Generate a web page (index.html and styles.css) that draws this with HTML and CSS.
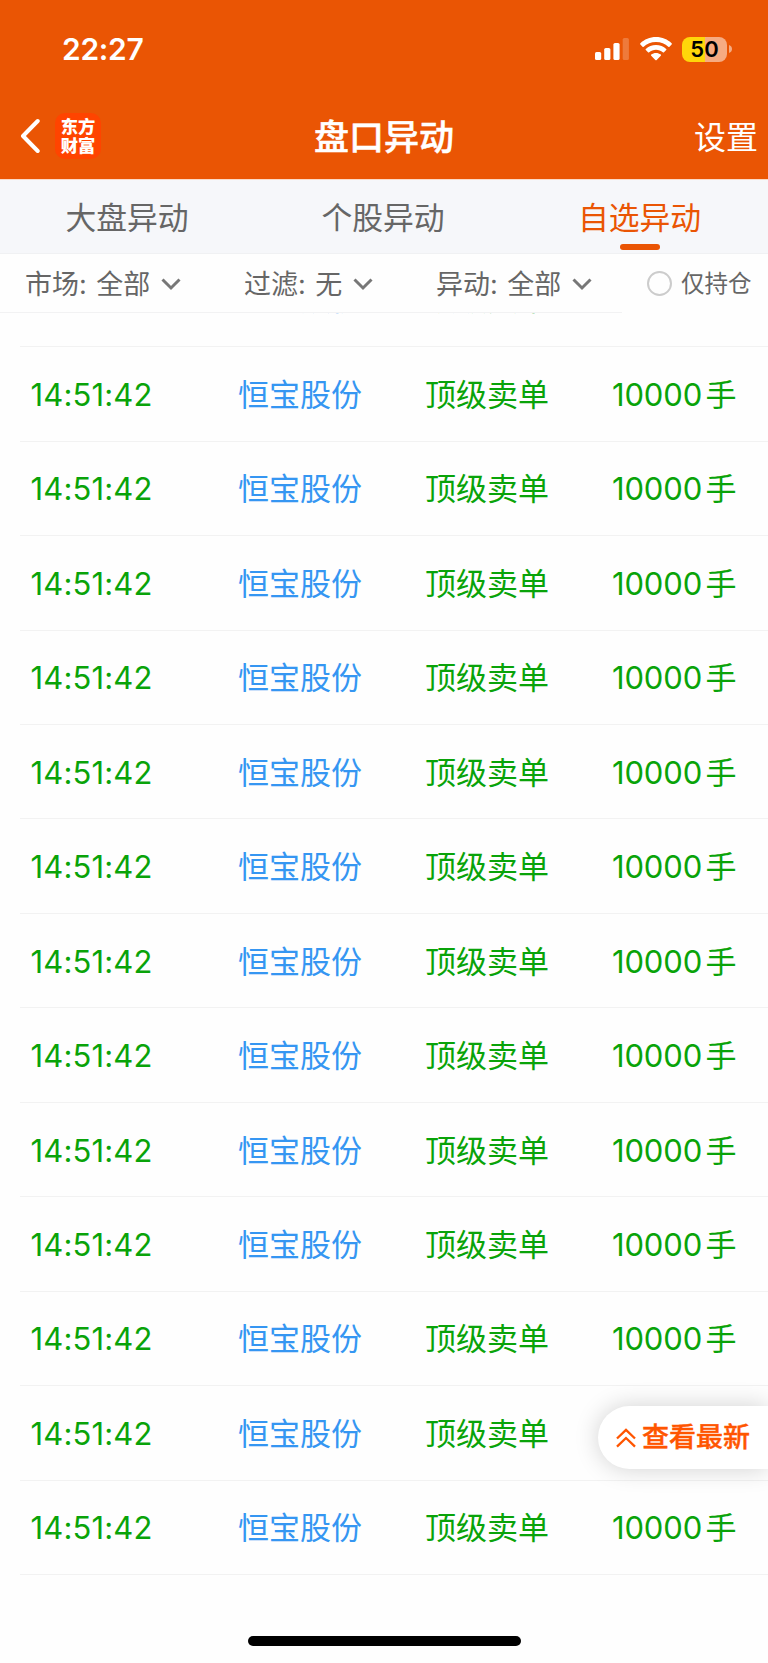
FILE: index.html
```html
<!DOCTYPE html>
<html lang="zh-CN">
<head>
<meta charset="utf-8">
<title>盘口异动</title>
<link rel="stylesheet" href="styles.css">
</head>
<body>
<div class="app">
  <header class="header">
    <div class="status">
      <span class="clock">22:27</span>
      <div class="status-icons">
        <svg class="signal" width="34" height="24" viewBox="0 0 34 24" fill="#fff">
          <rect x="0" y="15" width="6.2" height="8" rx="1.6"/>
          <rect x="9.2" y="11" width="6.2" height="12" rx="1.6"/>
          <rect x="18.4" y="6" width="6.2" height="17" rx="1.6"/>
          <rect x="27.7" y="1" width="6.2" height="22" rx="1.6" opacity=".22"/>
        </svg>
        <svg class="wifi" width="32" height="24" viewBox="0 0 32 24" fill="#fff">
          <path d="M16 0C22.200 0 27.700 2.400 31.600 6.200Q32.200 6.900 31.600 7.500L29.500 9.700Q28.900 10.200 28.300 9.700C25.200 6.800 20.900 5 16 5S6.800 6.800 3.700 9.700Q3.100 10.200 2.500 9.700L.4 7.500Q-.2 6.900 .4 6.200C4.300 2.400 9.800 0 16 0Z"/>
          <path d="M16 8C20 8 23.600 9.500 26.200 11.900Q26.800 12.500 26.200 13.100L24 15.200Q23.400 15.800 22.800 15.200C21 13.700 18.600 12.800 16 12.800S11 13.700 9.200 15.200Q8.600 15.800 8 15.200L5.800 13.100Q5.200 12.500 5.800 11.900C8.400 9.500 12 8 16 8Z"/>
          <path d="M16 16C17.800 16 19.500 16.600 20.800 17.600Q21.400 18.200 20.800 18.800L16.700 22.900Q16 23.600 15.300 22.900L11.200 18.800Q10.600 18.200 11.200 17.600C12.500 16.600 14.200 16 16 16Z"/>
        </svg>
        <div class="battery">50</div>
        <svg class="battery-tip" width="3" height="8" viewBox="0 0 3 8"><path d="M0 0Q3 1.200 3 4T0 8Z" fill="#f6ab82"/></svg>
      </div>
    </div>
    <div class="navbar">
      <div class="nav-left">
        <svg class="back" width="20" height="36" viewBox="0 0 20 36" fill="none" stroke="#fff" stroke-width="4" stroke-linecap="round" stroke-linejoin="round"><path d="M17.700 3L3 18L17.700 33"/></svg>
        <div class="logo"><span>东方</span><span>财富</span></div>
      </div>
      <h1 class="title">盘口异动</h1>
      <span class="settings">设置</span>
    </div>
  </header>
  <nav class="tabs">
    <span class="tab">大盘异动</span>
    <span class="tab">个股异动</span>
    <span class="tab active">自选异动</span>
  </nav>
  <div class="filters">
    <div class="filter market"><span>市场:</span><span>全部</span><svg class="chev" width="20" height="13" viewBox="0 0 20 13"><path d="M1.500 1.500L10 10L18.500 1.500"/></svg></div>
    <div class="filter screen"><span>过滤:</span><span>无</span><svg class="chev" width="20" height="13" viewBox="0 0 20 13"><path d="M1.500 1.500L10 10L18.500 1.500"/></svg></div>
    <div class="filter change"><span>异动:</span><span>全部</span><svg class="chev" width="20" height="13" viewBox="0 0 20 13"><path d="M1.500 1.500L10 10L18.500 1.500"/></svg></div>
    <div class="holding"><span class="radio"></span><span>仅持仓</span></div>
  </div>
  <main class="list" id="list"></main>
  <div class="latest">
    <svg width="20" height="20" viewBox="0 0 20 20" fill="none" stroke="#ff5500" stroke-width="2.300"><path d="M1 10.500L10 1.800L19 10.500M1 18.700L10 10L19 18.700"/></svg>
    <span>查看最新</span>
  </div>
  <div class="home"></div>
</div>
<script src="list.js"></script>
</body>
</html>
```
FILE: styles.css
```css
* { box-sizing: border-box; }
body { margin: 0; font-family: Inter, "Noto Sans CJK SC", sans-serif; }
.app { position: relative; width: 768px; height: 1663px; overflow: hidden; background: #fefefe; display: flex; flex-direction: column; }
.header { flex: none; height: 179px; background: #ea5504; color: #fff; }
.status { height: 98px; padding: 0 36px 0 62px; display: flex; align-items: center; justify-content: space-between; }
.clock { font-size: 30px; font-weight: 600; letter-spacing: -.3px; }
.status-icons { display: flex; align-items: center; }
.wifi { margin-left: 11px; }
.battery { margin-left: 10px; width: 45px; height: 25px; border-radius: 8px; background: linear-gradient(90deg, #ffd60a 51%, #f6ab82 51%); color: #000; font-size: 22px; font-weight: 600; line-height: 25px; text-align: center; }
.battery-tip { margin-left: 2px; }
.navbar { height: 76px; display: grid; grid-template-columns: 1fr auto 1fr; align-items: center; padding: 0 10px 0 20px; }
.nav-left { display: flex; align-items: center; gap: 15px; }
.logo { width: 46px; height: 46px; border-radius: 10px; background: #ff4400; display: flex; flex-direction: column; align-items: center; justify-content: center; font-family: "Noto Sans CJK SC", sans-serif; font-size: 17.300px; font-weight: 900; line-height: 19.500px; padding-bottom: 2px; }
.title { margin: 2px 5px 0 -5px; font-size: 35px; font-weight: 500; -webkit-text-stroke: .5px #fff; line-height: 50px; }
.settings { justify-self: end; margin-top: 3px; font-size: 32px; line-height: 50px; }
.tabs { flex: none; height: 75px; display: grid; grid-template-columns: repeat(3, 1fr); background: #f6f7fa; border-top: 1px solid #fbd9c6; border-bottom: 1px solid #f0f1f3; color: #666; font-size: 30.800px; line-height: 76px; text-align: center; }
.tab { height: 73px; padding-right: 2px; }
.tab.active { position: relative; color: #ea5504; padding-right: 1px; }
.tab.active::after { content: ""; position: absolute; left: 108px; top: 64px; width: 40px; height: 6px; border-radius: 3px; background: #ea5504; }
.filters { flex: none; height: 59px; display: flex; align-items: center; padding-left: 25px; color: #666; font-size: 27px; background: linear-gradient(#f2f2f3, #f2f2f3) 0 100% / 622px 1px no-repeat; line-height: 34px; }
.filter { display: flex; align-items: center; }
.filter span { margin-top: 2px; }
.filter span + span { margin-left: 9.500px; }
.market { width: 219px; }
.screen { width: 192px; }
.change { width: 211px; }
.chev { margin-left: 11px; margin-top: 1px; fill: none; stroke: #777; stroke-width: 3; }
.holding { display: flex; align-items: center; font-size: 23.500px; gap: 9px; }
.radio { width: 25px; height: 25px; border: 2px solid #ccc; border-radius: 50%; }
.list { flex: none; height: 1270px; overflow: hidden; display: flex; flex-direction: column; }
.row { flex: none; height: 94.460px; margin-left: 20px; padding: 2px 0 0 10.500px; border-bottom: 1px solid #f2f2f2; display: grid; grid-template-columns: 207.500px 187px 187px 1fr; align-items: center; font-size: 31px; line-height: 40px; color: #09a309; }
.row:first-child { margin-top: -60.300px; padding-top: 0; padding-bottom: 1px; }
.time { letter-spacing: .15px; }
.name { color: #3596f2; }
.count { display: flex; gap: 3.500px; }
.num { letter-spacing: -.15px; }
.latest { position: absolute; right: 0; top: 1406px; width: 170px; height: 63px; padding-left: 18px; border-radius: 32px 0 0 32px; background: #fff; box-shadow: 0 0 24px rgba(0, 0, 0, .18); display: flex; align-items: center; gap: 6px; color: #ff5500; font-size: 27px; font-weight: 500; -webkit-text-stroke: .4px #ff5500; line-height: 34px; }
.latest span { margin-top: 1px; }
.home { position: absolute; left: 247.500px; top: 1636px; width: 273.500px; height: 10px; border-radius: 5px; background: #000; }
```
FILE: list.js
```js
const list = document.getElementById("list");
const entry = { time: "14:51:42", name: "恒宝股份", kind: "顶级卖单", count: "10000", unit: "手" };
for (let i = 0; i < 14; i++) {
  const row = document.createElement("div");
  row.className = "row";
  row.innerHTML = `<span class="time">${entry.time}</span><span class="name">${entry.name}</span><span class="kind">${entry.kind}</span><span class="count"><span class="num">${entry.count}</span><span>${entry.unit}</span></span>`;
  list.append(row);
}
```
